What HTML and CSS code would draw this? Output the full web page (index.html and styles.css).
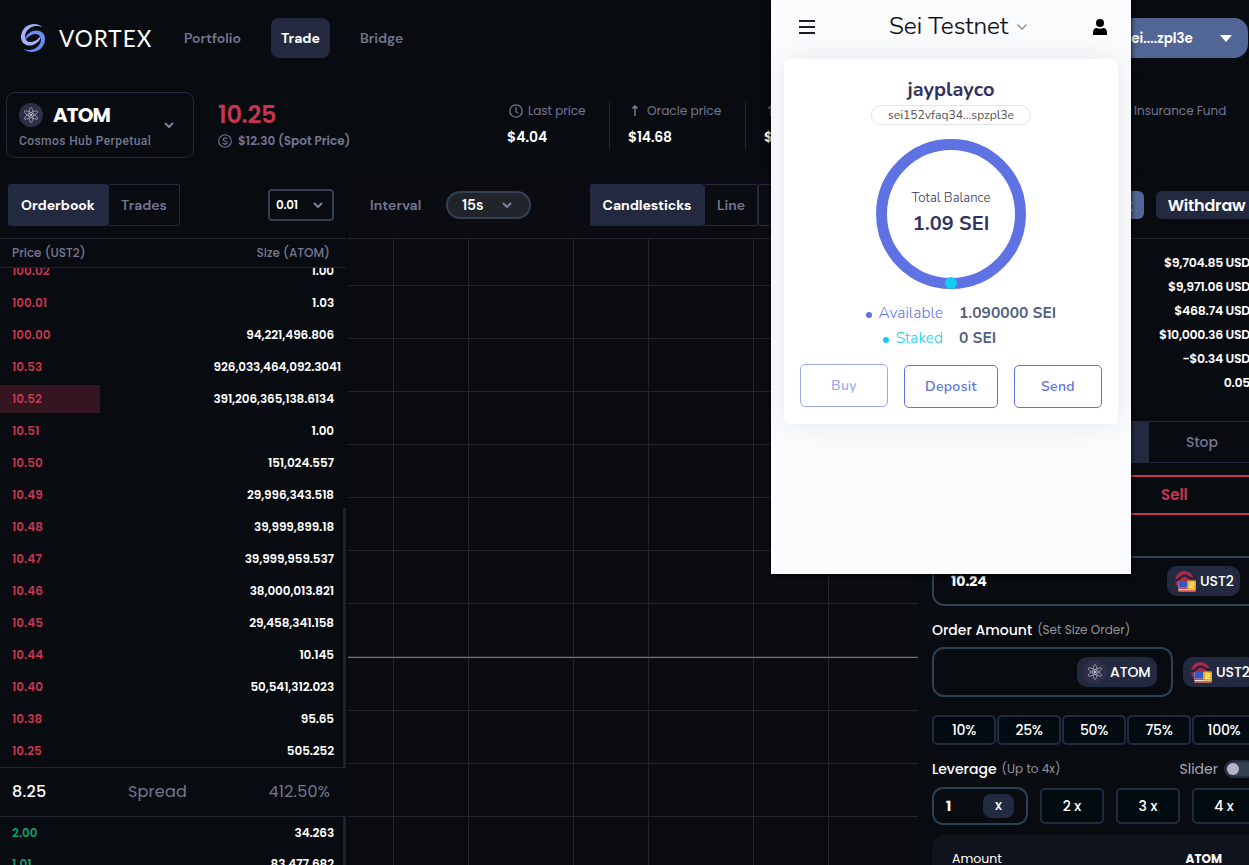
FILE: index.html
```html
<!DOCTYPE html>
<html lang="en">
<head>
  <meta charset="UTF-8" />
  <title>Vortex</title>
  <link rel="stylesheet" href="styles.css">
</head>
<body>
  <svg width="0" height="0" class="defs">
    <symbol id="atom" viewBox="0 0 24 24">
      <circle cx="12" cy="12" r="12" fill="#2e2e48"/>
      <g fill="none" stroke="#b4b5c0" stroke-width=".7">
        <ellipse cx="12" cy="12" rx="2.1" ry="7.600"/>
        <ellipse cx="12" cy="12" rx="2.1" ry="7.600" transform="rotate(60 12 12)"/>
        <ellipse cx="12" cy="12" rx="2.1" ry="7.600" transform="rotate(120 12 12)"/>
      </g>
      <circle cx="12" cy="12" r="1" fill="#e5e5ea"/>
    </symbol>
    <symbol id="ust" viewBox="0 0 24 24">
      <circle cx="11.500" cy="11.500" r="9.500" fill="#a82a48"/>
      <path d="M2 11.500C7 12 7 6.500 11.500 6.500S15 10 21 9.500" stroke="#2a2235" stroke-width="2.400" fill="none"/>
      <path d="M5.500 12h17v10.500h-17z" fill="#efdcd4"/>
      <path d="M5.500 19.300h17M5.500 21.900h17" stroke="#d8413c" stroke-width="1.400"/>
      <path d="M5.500 12h9v6.500h-9z" fill="#3458c0"/>
      <path d="M14.500 11.500h8.500v9h-8.500z" fill="#e5ab25"/>
      <path d="M16.500 13.800h4v2.300h-3.500v2.300h4" stroke="#fff08a" stroke-width="1.300" fill="none"/>
    </symbol>
    <symbol id="chev" viewBox="0 0 12 12">
      <path d="M2.500 4.500 6 8l3.500-3.500" fill="none" stroke="currentColor" stroke-width="2" stroke-linecap="round" stroke-linejoin="round"/>
    </symbol>
  </svg>

  <header class="navbar">
    <svg class="logo" viewBox="0 0 26 32">
      <path d="M22.500 5C14-2 1 4 1 15c0 7 6 9.500 11 8.200 5-1.200 9-5 9-10.200-3 5-7 7-10.500 7C5 20 4 14 6 10.500 9 5 15 2.500 22.500 5z" fill="#a3b0f8"/>
      <path transform="rotate(180 13 16)" d="M22.500 5C14-2 1 4 1 15c0 7 6 9.500 11 8.200 5-1.200 9-5 9-10.200-3 5-7 7-10.500 7C5 20 4 14 6 10.500 9 5 15 2.500 22.500 5z" fill="#6c8cf5"/>
    </svg>
    <span class="brand">VORTEX</span>
    <nav>
      <a class="w-portfolio">Portfolio</a>
      <a class="active">Trade</a>
      <a>Bridge</a>
    </nav>
    <button class="wallet-btn"><span>sei....zpl3e</span><i class="caret"></i></button>
  </header>

  <section class="market">
    <div class="pair">
      <svg class="pair-icon"><use href="#atom"/></svg>
      <strong>ATOM</strong>
      <small>Cosmos Hub Perpetual</small>
      <svg class="chev"><use href="#chev"/></svg>
    </div>
    <div class="price">
      <strong>10.25</strong>
      <span>
        <svg viewBox="0 0 14 14"><circle cx="7" cy="7" r="6.300" fill="none" stroke="#747791" stroke-width="1.100"/><path d="M9.200 5C8.500 3.500 5 3.700 5 5.400c0 2 4.200 1.200 4.200 3.200C9.200 10.400 5.400 10.500 4.800 9M7 3v1M7 10v1" fill="none" stroke="#747791" stroke-width="1.100"/></svg>
        $12.30 (Spot Price)
      </span>
    </div>
    <div class="stats">
      <div class="stat first">
        <label><svg viewBox="0 0 14 14"><circle cx="7" cy="7" r="6.200" fill="none" stroke="#747791" stroke-width="1.300"/><path d="M7 3v4.200l1.800 2" fill="none" stroke="#747791" stroke-width="1.300"/></svg>Last price</label>
        <b>$4.04</b>
      </div>
      <div class="stat">
        <label><svg class="arrow" viewBox="0 0 14 14"><path d="M7 12V2M4.500 4.500 7 2l2.500 2.500" fill="none" stroke="#8a8ca4" stroke-width="1.300"/></svg>Oracle price</label>
        <b>$14.68</b>
      </div>
      <div class="stat">
        <label><svg class="arrow" viewBox="0 0 14 14"><path d="M7 12V2M4.500 4.500 7 2l2.500 2.500" fill="none" stroke="#8a8ca4" stroke-width="1.300"/></svg>Index price</label>
        <b>$12.30</b>
      </div>
    </div>
    <span class="fund">Insurance Fund</span>
  </section>

  <main>
    <section class="book">
      <div class="book-bar">
        <div class="tabs">
          <span class="tab on t-book">Orderbook</span>
          <span class="tab t-trades">Trades</span>
        </div>
        <div class="step">0.01 <svg class="chev"><use href="#chev"/></svg></div>
      </div>
      <div class="book-head"><span>Price (UST2)</span><span>Size (ATOM)</span></div>
      <div class="asks">
        <div class="row"><i>100.02</i><b>1.00</b></div>
        <div class="row"><i>100.01</i><b>1.03</b></div>
        <div class="row"><i>100.00</i><b>94,221,496.806</b></div>
        <div class="row wide"><i>10.53</i><b>926,033,464,092.3041</b></div>
        <div class="row depth"><i>10.52</i><b>391,206,365,138.6134</b></div>
        <div class="row"><i>10.51</i><b>1.00</b></div>
        <div class="row"><i>10.50</i><b>151,024.557</b></div>
        <div class="row"><i>10.49</i><b>29,996,343.518</b></div>
        <div class="row"><i>10.48</i><b>39,999,899.18</b></div>
        <div class="row"><i>10.47</i><b>39,999,959.537</b></div>
        <div class="row"><i>10.46</i><b>38,000,013.821</b></div>
        <div class="row"><i>10.45</i><b>29,458,341.158</b></div>
        <div class="row"><i>10.44</i><b>10.145</b></div>
        <div class="row"><i>10.40</i><b>50,541,312.023</b></div>
        <div class="row"><i>10.38</i><b>95.65</b></div>
        <div class="row"><i>10.25</i><b>505.252</b></div>
      </div>
      <div class="spread"><b>8.25</b><span>Spread</span><em>412.50%</em></div>
      <div class="bids">
        <div class="row"><i>2.00</i><b>34.263</b></div>
        <div class="row"><i>1.01</i><b>83,477.682</b></div>
      </div>
    </section>

    <section class="chart">
      <div class="chart-bar">
        <span class="interval">Interval</span>
        <div class="pill">15s <svg class="chev"><use href="#chev"/></svg></div>
        <div class="tabs">
          <span class="tab on t-candle">Candlesticks</span>
          <span class="tab t-line">Line</span>
          <span class="tab t-depth">Depth</span>
        </div>
      </div>
      <svg class="grid" width="570" height="627" shape-rendering="crispEdges">
        <path d="M45.500 0v627M120.500 0v627M225.500 0v627M300.500 0v627M405.500 0v627M480.500 0v627M0 46.500h570M0 99.500h570M0 152.500h570M0 205.500h570M0 258.500h570M0 311.500h570M0 364.500h570M0 417.500h570M0 471.500h570M0 524.500h570M0 577.500h570" stroke="#23242c"/>
        <path d="M0 418.500h570" stroke="#1f9d7c"/>
      </svg>
    </section>

    <section class="order">
      <div class="funds"><button class="deposit">Deposit</button><button class="withdraw">Withdraw</button></div>
      <div class="account">
        <b>$9,704.85 USD</b><b>$9,971.06 USD</b><b>$468.74 USD</b><b>$10,000.36 USD</b><b>−$0.34 USD</b><b class="short">0.05</b>
      </div>
      <div class="types"><span class="on">Limit</span><span>Stop</span></div>
      <div class="sides"><span>Sell</span></div>
      <div class="field limit"><b>10.24</b><span class="coin"><svg><use href="#ust"/></svg>UST2</span></div>
      <div class="label amount-label">Order Amount <small>(Set Size Order)</small></div>
      <div class="amount">
        <div class="field"><span class="coin atom"><svg><use href="#atom"/></svg>ATOM</span></div>
        <span class="coin"><svg><use href="#ust"/></svg>UST2</span>
      </div>
      <div class="percents"><span>10%</span><span>25%</span><span>50%</span><span>75%</span><span>100%</span></div>
      <div class="label lev-label"><span>Leverage</span> <small>(Up to 4x)</small><em>Slider</em><i class="switch"></i></div>
      <div class="leverage">
        <div class="lev-input"><b>1</b><span>x</span></div>
        <span class="lev">2 x</span><span class="lev">3 x</span><span class="lev">4 x</span>
      </div>
      <div class="summary"><span>Amount</span><b>ATOM</b></div>
    </section>
  </main>

  <!-- wallet extension popup -->
  <aside class="wallet">
    <div class="wallet-top">
      <svg class="menu" viewBox="0 0 16 14"><path d="M0 1h16M0 7h16M0 13h16" stroke="#1c1c22" stroke-width="1.800"/></svg>
      <h2>Sei Testnet</h2>
      <svg class="down" viewBox="0 0 12 8"><path d="M1.500 1.500 6 6l4.500-4.500" fill="none" stroke="#8b8b92" stroke-width="1.300"/></svg>
      <svg class="user" viewBox="0 0 14 16"><circle cx="7" cy="4" r="4"/><path d="M0 16v-2.500C0 10.500 1.500 9 3.500 9c2 1 5 1 7 0 2 0 3.500 1.500 3.500 4.500V16z"/></svg>
    </div>
    <div class="card">
      <h3>jayplayco</h3>
      <div class="address">sei152vfaq34...spzpl3e</div>
      <div class="ring">
        <span>Total Balance</span>
        <b>1.09 SEI</b>
        <i></i>
      </div>
      <div class="balances">
        <span class="avail">Available</span><b>1.090000 SEI</b>
        <span class="staked">Staked</span><b>0 SEI</b>
      </div>
      <div class="actions"><button disabled>Buy</button><button>Deposit</button><button>Send</button></div>
    </div>
  </aside>
</body>
</html>
```
FILE: styles.css
```css
* {
  box-sizing: border-box;
}

body {
  margin: 0;
  width: 1249px;
  height: 865px;
  overflow: hidden;
  position: relative;
  background: #080b10;
  color: #fff;
  font-family: Poppins, Inter, sans-serif;
  font-size: 12px;
}

.defs {
  position: absolute;
}

button {
  border: none;
  font-family: inherit;
  color: inherit;
  padding: 0;
}

i, em {
  font-style: normal;
}

.chev {
  width: 12px;
  height: 12px;
  color: #7c7f98;
}

/* navbar */
.navbar {
  height: 79px;
  display: flex;
  align-items: center;
  padding: 0 1px 1px 20px;
  border-bottom: 2px solid #020c12;
}

.logo {
  width: 26px;
  height: 32px;
}

.brand {
  margin-left: 13px;
  width: 114px;
  font-family: Lato, sans-serif;
  font-size: 22.5px;
  letter-spacing: 1px;
}

nav {
  display: flex;
}

nav a {
  height: 40px;
  line-height: 40px;
  margin-right: 19px;
  padding: 0 11px;
  border-radius: 8px;
  color: #747791;
  font-family: "DM Sans", Inter, sans-serif;
  font-size: 14px;
  font-weight: 600;
}

nav a.w-portfolio {
  width: 79px;
}

nav a.active {
  width: 59px;
  padding: 0 10px;
  background: #232a3f;
  color: #fff;
  font-weight: 700;
  letter-spacing: -.1px;
}

.wallet-btn {
  margin-left: auto;
  width: 160px;
  height: 40px;
  display: flex;
  align-items: center;
  justify-content: space-between;
  padding: 1px 16px 0 36px;
  border-radius: 14px;
  background: #526695;
  font-size: 13.4px;
  font-weight: 600;
}

.caret {
  border: 6px solid transparent;
  border-top: 7px solid #fff;
  border-bottom: 0;
}

/* market bar */
.market {
  height: 93px;
  display: flex;
  align-items: flex-start;
  padding-top: 13px;
  border-bottom: 2px solid #020c12;
}

.pair {
  width: 188px;
  height: 66px;
  margin-left: 6px;
  padding: 8px 17px 0 12px;
  border: 1px solid #232a3f;
  border-radius: 9px;
  display: grid;
  grid-template-columns: 34px 1fr 13px;
  grid-template-rows: 28px 24px;
  align-items: center;
}

.pair-icon {
  width: 24px;
  height: 24px;
}

.pair strong {
  font-size: 20px;
  letter-spacing: -.9px;
}

.pair small {
  grid-row: 2;
  grid-column: 1 / 3;
  color: #747791;
  font-size: 12px;
  font-weight: 500;
  font-family: Roboto, sans-serif;
  letter-spacing: .42px;
  white-space: nowrap;
}

.pair .chev {
  grid-column: 3;
  grid-row: 1 / 3;
  margin-bottom: 4px;
}

.price {
  margin: 9px 0 0 24px;
  width: 290px;
}

.price strong {
  display: block;
  line-height: 28px;
  color: #c73650;
  font-size: 24px;
  font-weight: 600;
  letter-spacing: -.3px;
}

.price span {
  display: flex;
  align-items: center;
  gap: 6px;
  line-height: 24px;
  color: #747791;
  font-weight: 600;
}

.price svg, .stat svg {
  width: 14px;
  height: 14px;
  margin-bottom: 1px;
}

.stats {
  display: flex;
  width: 626px;
  padding-top: 9px;
}

.stat {
  height: 48px;
  width: 136px;
  padding-left: 18px;
  border-right: 1px solid #24262e;
}

.stat.first {
  width: 102px;
  padding-left: 1px;
}

.stat b {
  display: block;
  line-height: 32px;
  font-size: 14px;
  font-weight: 600;
  letter-spacing: -.2px;
}

.stat.first b {
  margin-left: -2px;
  letter-spacing: 0;
}

.stat label {
  display: flex;
  align-items: center;
  gap: 5px;
  height: 20px;
  color: #747791;
  font-size: 12.2px;
}

.stat.first label {
  font-size: 12px;
}

.fund {
  line-height: 38px;
  color: #747791;
  font-size: 12px;
  white-space: nowrap;
}

/* columns */
main {
  display: grid;
  grid-template-columns: 348px 570px 331px;
  height: 693px;
}

.tabs {
  display: flex;
}

.tab {
  height: 42px;
  line-height: 40px;
  border: 1px solid #232a3f;
  border-radius: 2px;
  text-align: center;
  font-family: "DM Sans", Inter, sans-serif;
  font-size: 14px;
  font-weight: 600;
  color: #747791;
}

.tab.on {
  background: #232a3f;
  color: #fff;
  font-weight: 700;
  letter-spacing: -.05px;
}

.t-book { width: 100px; }
.t-trades { width: 72px; }
.t-candle { width: 114px; }
.t-line { width: 54px; }
.t-depth { width: 70px; }

/* order book */
.book {
  border-right: 2px solid #020c12;
  height: 693px;
  overflow: hidden;
}

.book-bar {
  height: 66px;
  padding: 12px 12px 0 8px;
  display: flex;
  justify-content: space-between;
}

.step {
  margin-top: 5px;
  width: 66px;
  height: 32px;
  padding: 0 8px 0 6px;
  border: 2px solid #334052;
  border-radius: 4px;
  display: flex;
  align-items: center;
  justify-content: space-between;
  font-weight: 600;
  letter-spacing: -.3px;
}

.book-head {
  height: 30px;
  line-height: 28px;
  padding: 0 16px 0 12px;
  border-top: 1px solid #24262e;
  border-bottom: 1px solid #24262e;
  display: flex;
  justify-content: space-between;
  color: #747791;
  font-weight: 500;
}

.asks {
  height: 499px;
  overflow: hidden;
  position: relative;
}

.asks .row:first-child {
  margin-top: -13px;
}

.asks::after, .bids::after {
  content: "";
  position: absolute;
  right: 0;
  top: 240px;
  bottom: 0;
  width: 3px;
  background: #20232d;
}

.row {
  height: 32px;
  line-height: 32px;
  padding: 0 12px;
  display: flex;
  justify-content: space-between;
  font-weight: 600;
}

.row i {
  color: #c73650;
}

.row b {
  font-weight: 600;
  letter-spacing: -.1px;
}

.row.wide {
  padding-right: 5px;
}

.row.depth {
  background: linear-gradient(#35151f, #35151f) 0 2px / 100px 28px no-repeat;
}

.spread {
  height: 50px;
  line-height: 47px;
  padding: 0 16px 0 12px;
  border-top: 1px solid #24262e;
  border-bottom: 1px solid #24262e;
  display: flex;
  justify-content: space-between;
  font-size: 16px;
  letter-spacing: .2px;
  color: #747791;
}

.spread b {
  color: #fff;
  font-weight: 500;
}

.bids {
  position: relative;
  height: 60px;
}

.bids .row:first-child {
  height: 31px;
  line-height: 31px;
}

.bids::after {
  top: 0;
}

.bids .row i {
  color: #0f9f6c;
}

/* chart */
.chart {
  background: #0b0c11;
}

.chart-bar {
  height: 66px;
  padding: 12px 0 0 22px;
  display: flex;
  align-items: flex-start;
  font-family: "DM Sans", Inter, sans-serif;
}

.interval {
  width: 76px;
  line-height: 43px;
  font-size: 14px;
  font-weight: 600;
  letter-spacing: .1px;
  color: #747791;
}

.pill {
  width: 85px;
  height: 28px;
  margin: 7px 59px 0 0;
  padding: 0 16px 0 14px;
  border: 2px solid #334052;
  border-radius: 14px;
  background: #22242c;
  display: flex;
  align-items: center;
  justify-content: space-between;
  font-size: 14.5px;
  font-weight: 600;
}

.grid {
  display: block;
  border-top: 1px solid #23242c;
}

/* order form */
.order {
  padding-left: 14px;
  overflow: hidden;
}

.funds {
  display: flex;
  height: 67px;
  padding-top: 19px;
  gap: 12px;
  margin-left: -14px;
  border-bottom: 1px solid #24262e;
}

.funds button {
  height: 28px;
  border-radius: 6px;
  font-size: 16px;
  font-weight: 600;
  line-height: 27px;
}

.funds .deposit {
  width: 226px;
  flex: none;
  padding-right: 12px;
  text-align: right;
  background: #526695;
}

.funds .withdraw {
  width: 101px;
  flex: none;
  background: #232a3f;
  letter-spacing: -.2px;
}

.account {
  height: 182px;
  padding-top: 12px;
  width: 324px;
  display: flex;
  flex-direction: column;
  align-items: flex-end;
}

.account b {
  height: 24px;
  line-height: 24px;
  margin-right: 6px;
  font-size: 12.5px;
  font-weight: 600;
  letter-spacing: -.3px;
}

.types {
  display: flex;
  height: 42px;
  border-top: 1px solid #232a3f;
  border-bottom: 1px solid #232a3f;
  line-height: 41px;
  font-size: 14px;
  font-weight: 500;
  color: #747791;
}

.types span {
  width: 106px;
  flex: none;
  text-align: center;
}

.types .on {
  width: 217px;
  background: #232a3f;
}

.sides {
  margin-top: 12px;
  height: 40px;
  line-height: 36px;
  padding-left: 229px;
  border-top: 2px solid #c73650;
  border-bottom: 2px solid #c73650;
  color: #c73650;
  font-size: 15px;
  font-weight: 600;
}

.field {
  height: 50px;
  border: 2px solid #294255;
  border-radius: 12px;
  display: flex;
  align-items: center;
  justify-content: space-between;
  flex: none;
}

.limit {
  margin-top: 41px;
  width: 330px;
  padding: 0 20px 0 17px;
  font-size: 14px;
}

.coin {
  width: 73px;
  height: 30px;
  padding-left: 6px;
  border-radius: 10px;
  background: #232a3f;
  display: flex;
  align-items: center;
  gap: 3px;
  flex: none;
  font-size: 14px;
  font-weight: 500;
  letter-spacing: -.1px;
}

.coin svg {
  width: 24px;
  height: 24px;
  flex: none;
}

.coin.atom {
  width: 80px;
}

.label {
  display: flex;
  align-items: center;
  gap: 5px;
  font-size: 14px;
  font-weight: 500;
}

.label small {
  color: #92949c;
  font-size: 12px;
  font-weight: 400;
}

.amount-label {
  height: 48px;
  margin-bottom: -7px;
}

.amount {
  display: flex;
  align-items: center;
  gap: 10px;
}

.amount .field {
  width: 241px;
  justify-content: flex-end;
  padding-right: 14px;
}

.percents {
  display: flex;
  margin-top: 18px;
  gap: 1px;
}

.percents span {
  width: 64px;
  height: 30px;
  line-height: 26px;
  flex: none;
  border: 2px solid #232a3f;
  border-radius: 5px;
  background: #020b10;
  text-align: center;
  font-size: 14px;
  font-weight: 500;
  letter-spacing: -.3px;
}

.lev-label {
  margin-top: 13px;
  height: 22px;
}

.lev-label em {
  margin-left: auto;
  color: #a6a9b8;
  font-weight: 400;
}

.switch {
  width: 32px;
  height: 18px;
  margin: 0 -7px 0 1px;
  border: 2px solid #232a3f;
  border-radius: 9px;
  background: #334052;
  flex: none;
}

.switch::before {
  content: "";
  display: block;
  width: 12px;
  height: 12px;
  margin: 1px;
  border-radius: 50%;
  background: #b4b5c6;
}

.leverage {
  margin-top: 7px;
  display: flex;
  align-items: center;
  gap: 12px;
  font-size: 14px;
}

.lev-input {
  width: 96px;
  height: 38px;
  flex: none;
  padding: 0 12px;
  border: 2px solid #294255;
  border-radius: 11px;
  display: flex;
  align-items: center;
  justify-content: space-between;
}

.lev-input span {
  width: 31px;
  height: 24px;
  line-height: 23px;
  border-radius: 8px;
  background: #232a3f;
  text-align: center;
  font-weight: 500;
}

.lev {
  width: 64px;
  height: 36px;
  line-height: 32px;
  flex: none;
  border: 2px solid #232a3f;
  border-radius: 5px;
  background: #020b10;
  text-align: center;
  font-weight: 500;
}

.summary {
  margin-top: 10px;
  width: 340px;
  height: 80px;
  padding: 15px 50px 0 20px;
  border-radius: 12px;
  background: #10131b;
  display: flex;
  justify-content: space-between;
  font-size: 12.5px;
  line-height: 18px;
}

.summary b {
  font-size: 12px;
}

/* wallet popup */
.wallet {
  position: absolute;
  left: 771px;
  top: 0;
  width: 360px;
  height: 574px;
  overflow: hidden;
  background: #fbfcfd;
  color: #32325d;
  font-family: Nunito, "Open Sans", sans-serif;
  box-shadow: 0 1px 5px #000;
}

.wallet-top {
  height: 59px;
  padding: 0 24px 5px 28px;
  display: flex;
  align-items: center;
}

.menu {
  width: 16px;
  height: 14px;
}

.wallet h2 {
  margin: -3px 0 0 74px;
  width: 120px;
  color: #0d0d12;
  font-size: 24.4px;
  font-weight: 300;
  -webkit-text-stroke: .2px #0d0d12;
  white-space: nowrap;
}

.down {
  width: 12px;
  height: 8px;
  margin-left: 7px;
}

.user {
  width: 14px;
  height: 16px;
  margin-left: auto;
}

.card {
  width: 334px;
  height: 365px;
  margin-left: 13px;
  padding: 17px 16px 0;
  border-radius: 5px;
  background: #fff;
  box-shadow: 0 0 32px rgba(136, 152, 170, .2);
  display: flex;
  flex-direction: column;
  align-items: center;
}

.card h3 {
  margin: 0;
  line-height: 28px;
  font-size: 20px;
  font-weight: 700;
}

.address {
  width: 160px;
  height: 20px;
  margin-top: 1px;
  line-height: 18px;
  border: 1px solid #e2e4e8;
  border-radius: 10px;
  text-align: center;
  color: #525252;
  font-size: 12.1px;
}

.ring {
  width: 150px;
  height: 150px;
  margin-top: 14px;
  padding-top: 38px;
  border: 11px solid #5e72e4;
  border-radius: 50%;
  position: relative;
  text-align: center;
}

.ring span {
  display: block;
  font-size: 13.2px;
  font-weight: 300;
  line-height: 20px;
}

.ring b {
  display: block;
  line-height: 31px;
  font-size: 20px;
  font-weight: 700;
}

.ring i {
  position: absolute;
  left: 58px;
  bottom: -11px;
  width: 12px;
  height: 12px;
  border-radius: 50%;
  background: #11cdef;
}

.balances {
  width: 302px;
  margin-top: 12px;
  display: grid;
  grid-template-columns: 143px 1fr;
  column-gap: 16px;
  line-height: 25px;
  font-size: 15.6px;
}

.balances span {
  text-align: right;
  font-weight: 300;
}

.balances span::before {
  content: "";
  display: inline-block;
  width: 6px;
  height: 6px;
  margin-right: 7px;
  border-radius: 50%;
  background: currentColor;
}

.balances b {
  color: #525f7f;
  font-size: 15.6px;
  font-weight: 700;
}

.balances .avail {
  color: #5e72e4;
}

.balances .staked {
  color: #11cdef;
}

.actions {
  width: 302px;
  margin-top: 14px;
  display: grid;
  grid-template-columns: 88px 94px 88px;
  gap: 16px;
}

.actions button {
  height: 43px;
  border: 1px solid #5e72e4;
  border-radius: 5px;
  background: #fff;
  color: #5e72e4;
  font-size: 14px;
  font-weight: 600;
  letter-spacing: .35px;
}

.actions button:disabled {
  opacity: .6;
  position: relative;
  top: -1px;
}
```
